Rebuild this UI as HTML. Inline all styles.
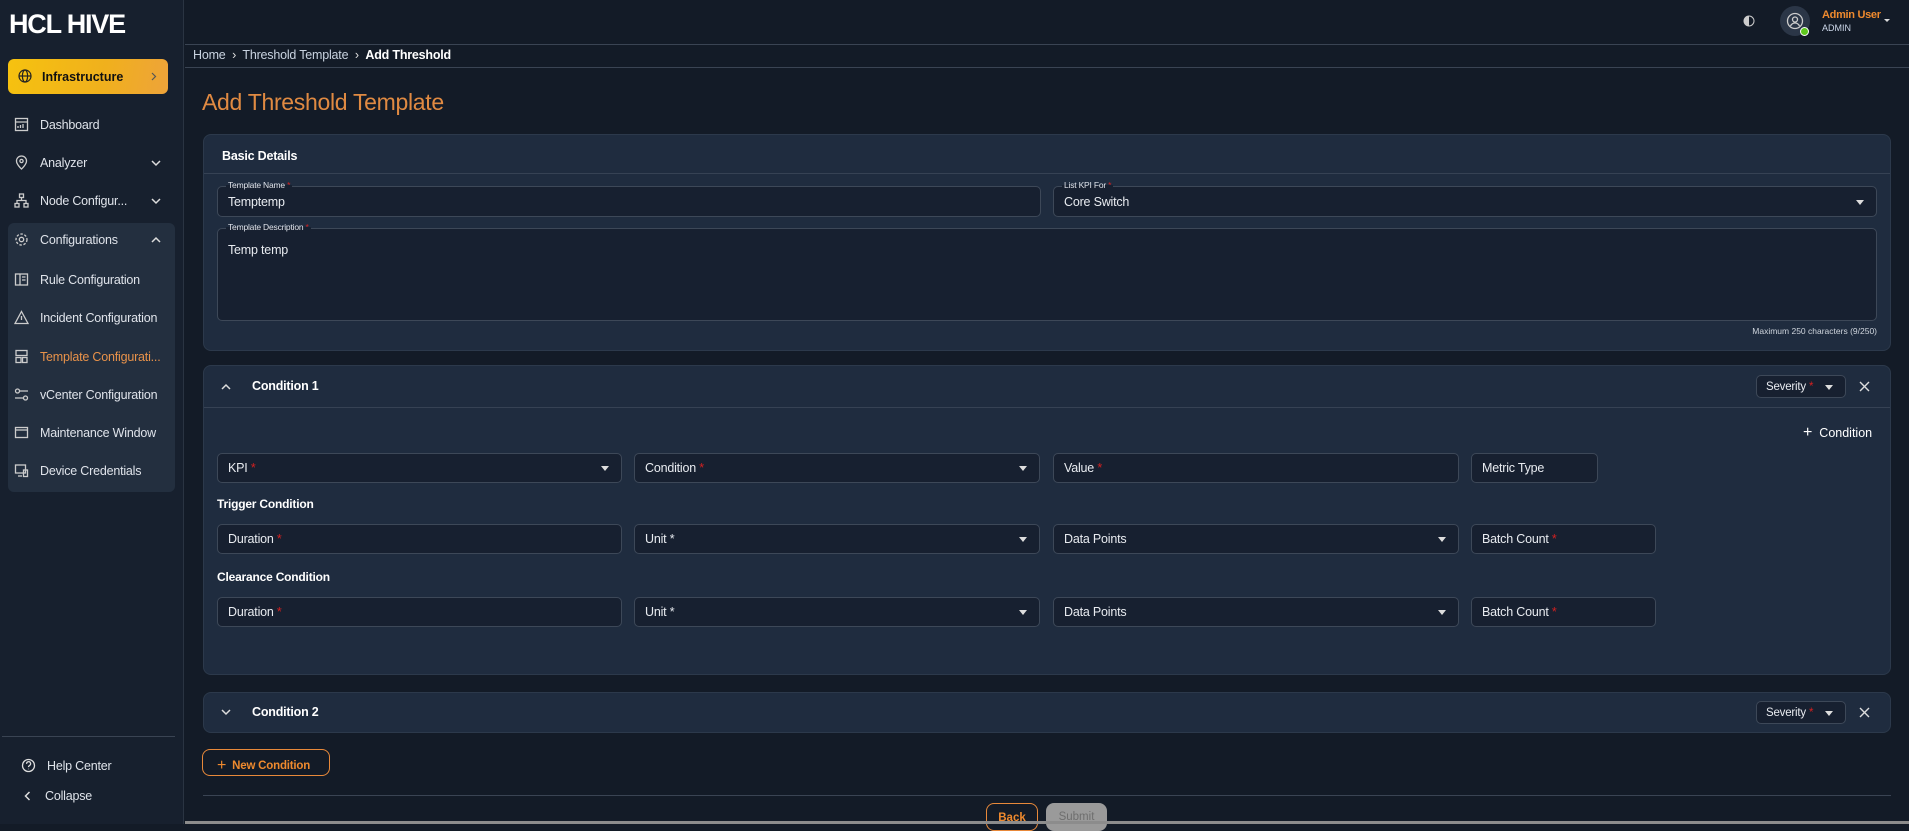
<!DOCTYPE html>
<html><head><meta charset="utf-8"><style>
*{box-sizing:border-box;margin:0;padding:0}
body{width:1909px;height:824px;overflow:hidden;background:#131b27;font-family:"Liberation Sans",sans-serif;color:#e6e9ee;position:relative}
.a{position:absolute}
#side{left:0;top:0;width:184px;height:824px;background:#17202e;border-right:1px solid #2a3442}
.logo{left:9px;top:9px;font-size:27px;font-weight:bold;color:#fff;letter-spacing:-1.2px}
.infra{left:8px;top:59px;width:160px;height:35px;border-radius:6px;background:linear-gradient(100deg,#f6c20f,#f0b01d 60%,#eea33a);color:#111;font-size:12.5px;font-weight:bold}
.nav{left:14px;font-size:12.5px;color:#dfe3ea;display:flex;align-items:center;gap:11px;letter-spacing:-0.2px}
.ic{width:15px;height:15px;display:inline-block}
.grp{left:8px;top:223px;width:167px;height:269px;background:#232f3f;border-radius:6px}
.inp{background:#172030;border:1px solid #3d4858;border-radius:5px;font-size:12.5px;color:#e8ebf0;display:flex;align-items:center;padding-left:10px;letter-spacing:-0.2px}
.st{color:#d42020}
.card{background:#1f2c3f;border:1px solid #2c394b;border-radius:8px}
.dd{position:absolute;right:12px;top:50%;margin-top:-2px;border-left:4px solid transparent;border-right:4px solid transparent;border-top:5px solid #ddd}
.lbl{position:absolute;top:-7px;left:8px;font-size:8.5px;background:linear-gradient(#1f2c3f 50%,#172030 50%);padding:0 2px;color:#dfe3ea}
.h{font-size:12.5px;font-weight:bold;color:#fff;letter-spacing:-0.2px}
</style></head><body>
<div id="side" class="a">
  <div class="a logo">HCL HIVE</div>
  <div class="a infra"><svg class="a" style="left:10px;top:10px" width="14" height="14" viewBox="0 0 14 14" fill="none" stroke="#222" stroke-width="1.2"><circle cx="7" cy="7" r="6"/><ellipse cx="7" cy="7" rx="2.6" ry="6"/><path d="M1 7h12"/></svg><span class="a" style="left:34px;top:11px">Infrastructure</span><svg class="a" style="left:143px;top:13px" width="6" height="9" viewBox="0 0 6 9" fill="none" stroke="#555" stroke-width="1.2"><path d="M1 1l3.5 3.5L1 8"/></svg></div>
  <div class="a nav" style="top:117px"><svg class="ic" viewBox="0 0 15 15" fill="none" stroke="#ccc" stroke-width="1.3"><rect x="1.5" y="1.5" width="12" height="12"/><path d="M1.5 5h12M4 11V9M6.5 11V8M9 11V7"/></svg>Dashboard</div>
  <div class="a nav" style="top:155px"><svg class="ic" viewBox="0 0 15 15" fill="none" stroke="#ccc" stroke-width="1.3"><path d="M7.5 14s-5-4.5-5-8a5 5 0 0110 0c0 3.5-5 8-5 8z"/><circle cx="7.5" cy="6" r="1.6"/></svg>Analyzer</div>
  <svg class="a" style="left:151px;top:160px" width="10" height="7" viewBox="0 0 10 7" fill="none" stroke="#ddd" stroke-width="1.5"><path d="M1 1l4 4 4-4"/></svg>
  <div class="a nav" style="top:193px"><svg class="ic" viewBox="0 0 15 15" fill="none" stroke="#ccc" stroke-width="1.3"><rect x="5.5" y="1" width="4" height="3.5"/><rect x="1" y="10.5" width="4" height="3.5"/><rect x="10" y="10.5" width="4" height="3.5"/><path d="M7.5 4.5v3M3 10.5V7.5h9v3"/></svg>Node Configur...</div>
  <svg class="a" style="left:151px;top:198px" width="10" height="7" viewBox="0 0 10 7" fill="none" stroke="#ddd" stroke-width="1.5"><path d="M1 1l4 4 4-4"/></svg>
  <div class="a grp"></div>
  <div class="a nav" style="top:232px"><svg class="ic" viewBox="0 0 15 15" fill="none" stroke="#ccc" stroke-width="1.3"><circle cx="7.5" cy="7.5" r="2.2"/><circle cx="7.5" cy="7.5" r="5.5" stroke-dasharray="2.5 1.6"/></svg>Configurations</div>
  <svg class="a" style="left:151px;top:236px" width="10" height="7" viewBox="0 0 10 7" fill="none" stroke="#ddd" stroke-width="1.5"><path d="M1 6l4-4 4 4"/></svg>
  <div class="a nav" style="top:272px"><svg class="ic" viewBox="0 0 15 15" fill="none" stroke="#ccc" stroke-width="1.3"><rect x="1.5" y="2" width="12" height="11"/><path d="M6 2v11M8 5h3.5M8 8h3.5"/></svg>Rule Configuration</div>
  <div class="a nav" style="top:310px"><svg class="ic" viewBox="0 0 15 15" fill="none" stroke="#ccc" stroke-width="1.3"><path d="M7.5 1.5L14 13.5H1z"/><path d="M7.5 6v4"/></svg>Incident Configuration</div>
  <div class="a nav" style="top:349px;color:#e8924a"><svg class="ic" viewBox="0 0 15 15" fill="none" stroke="#ccc" stroke-width="1.3"><rect x="2" y="1.5" width="11" height="5"/><rect x="2" y="8.5" width="5" height="5"/><rect x="8.5" y="8.5" width="4.5" height="5"/></svg>Template Configurati...</div>
  <div class="a nav" style="top:387px"><svg class="ic" viewBox="0 0 15 15" fill="none" stroke="#ccc" stroke-width="1.3"><circle cx="3.5" cy="4" r="2"/><circle cx="11.5" cy="11" r="2"/><path d="M5.5 4H14M1 11h8.5"/></svg>vCenter Configuration</div>
  <div class="a nav" style="top:425px"><svg class="ic" viewBox="0 0 15 15" fill="none" stroke="#ccc" stroke-width="1.3"><rect x="1.5" y="2.5" width="12" height="10"/><path d="M1.5 5h12"/></svg>Maintenance Window</div>
  <div class="a nav" style="top:463px"><svg class="ic" viewBox="0 0 15 15" fill="none" stroke="#ccc" stroke-width="1.3"><rect x="1.5" y="2" width="10" height="8"/><rect x="9.5" y="7" width="4" height="6.5"/><path d="M4 13h4"/></svg>Device Credentials</div>
  <div class="a" style="left:2px;top:736px;width:173px;height:1px;background:#3a4453"></div>
  <div class="a nav" style="left:21px;top:758px"><svg class="ic" viewBox="0 0 15 15" fill="none" stroke="#ddd" stroke-width="1.3"><circle cx="7.5" cy="7.5" r="6"/><path d="M5.6 5.8a2 2 0 113 1.6c-.8.5-1.1.9-1.1 1.7M7.5 10.8v.4"/></svg>Help Center</div>
  <div class="a nav" style="left:24px;top:789px;gap:14px"><svg width="7" height="10" viewBox="0 0 7 10" fill="none" stroke="#ddd" stroke-width="1.5"><path d="M5.5 1L1.5 5l4 4"/></svg>Collapse</div>
</div>
<div class="a" style="left:185px;top:44px;width:1724px;height:1px;background:#3a4453"></div>
<div class="a" style="left:185px;top:67px;width:1724px;height:1px;background:#3a4453"></div>
<div class="a" style="left:193px;top:48px;font-size:12.5px;color:#c9d3e0;letter-spacing:-0.2px">Home &nbsp;<span style="color:#ddd">&#8250;</span>&nbsp; Threshold Template &nbsp;<span style="color:#ddd">&#8250;</span>&nbsp; <b style="color:#fff">Add Threshold</b></div>
<svg class="a" style="left:1741px;top:13px" width="16" height="16" viewBox="0 0 16 16"><path d="M8 3a5 5 0 000 10z" fill="#ccc"/><circle cx="8" cy="8" r="5" fill="none" stroke="#ccc" stroke-width="1"/></svg>
<div class="a" style="left:1780px;top:6px;width:30px;height:30px;border-radius:50%;background:#2b3647"></div>
<svg class="a" style="left:1786px;top:12px" width="18" height="18" viewBox="0 0 18 18" fill="none" stroke="#ccc" stroke-width="1.3"><circle cx="9" cy="9" r="7.5"/><circle cx="9" cy="7.5" r="2.5"/><path d="M4.5 14c1-2 2.5-3 4.5-3s3.5 1 4.5 3"/></svg>
<div class="a" style="left:1800px;top:27px;width:9px;height:9px;border-radius:50%;background:#5ec81e;border:1.5px solid #fff"></div>
<div class="a" style="left:1822px;top:9px;font-size:11px;font-weight:bold;color:#ef8a2e;letter-spacing:-0.3px">Admin User</div>
<div class="a" style="left:1822px;top:23px;font-size:9px;color:#cdd8ea">ADMIN</div>
<div class="a" style="left:1884px;top:19px;border-left:3px solid transparent;border-right:3px solid transparent;border-top:3px solid #ddd"></div>
<div class="a" style="left:202px;top:89px;font-size:23px;color:#e08a42;letter-spacing:-0.3px">Add Threshold Template</div>
<div class="a card" style="left:203px;top:134px;width:1688px;height:217px">
  <div class="a h" style="left:18px;top:14px">Basic Details</div>
  <div class="a" style="left:0;top:38px;width:100%;height:1px;background:#364254"></div>
</div>
<div class="a inp" style="left:217px;top:186px;width:824px;height:31px">Temptemp<span class="lbl">Template Name <span class="st">*</span></span></div>
<div class="a inp" style="left:1053px;top:186px;width:824px;height:31px">Core Switch<span class="lbl">List KPI For <span class="st">*</span></span><i class="dd"></i></div>
<div class="a inp" style="left:217px;top:228px;width:1660px;height:93px;align-items:flex-start;padding-top:14px">Temp temp<span class="lbl">Template Description <span class="st">*</span></span></div>
<div class="a" style="right:32px;top:326px;font-size:8.5px;color:#cfd5dd">Maximum 250 characters (9/250)</div>
<div class="a card" style="left:203px;top:365px;width:1688px;height:310px">
  <div class="a" style="left:0;top:41px;width:100%;height:1px;background:#364254"></div>
</div>
<svg class="a" style="left:221px;top:383px" width="10" height="7" viewBox="0 0 10 7" fill="none" stroke="#ddd" stroke-width="1.5"><path d="M1 6l4-4 4 4"/></svg>
<div class="a h" style="left:252px;top:379px">Condition 1</div>
<div class="a inp" style="left:1756px;top:375px;width:90px;height:23px;font-size:11.5px;padding-left:9px">Severity&nbsp;<span class="st">*</span><i class="dd"></i></div>
<svg class="a" style="left:1859px;top:381px" width="11" height="11" viewBox="0 0 11 11" stroke="#ddd" stroke-width="1.4"><path d="M1 1l9 9M10 1l-9 9"/></svg>
<div class="a" style="left:1803px;top:424px;font-size:12.5px;color:#fff"><span style="font-size:16px">+</span>&nbsp; Condition</div>
<div class="a inp" style="left:217px;top:453px;width:405px;height:30px">KPI&nbsp;<span class="st">*</span><i class="dd"></i></div>
<div class="a inp" style="left:634px;top:453px;width:406px;height:30px">Condition&nbsp;<span class="st">*</span><i class="dd"></i></div>
<div class="a inp" style="left:1053px;top:453px;width:406px;height:30px">Value&nbsp;<span class="st">*</span></div>
<div class="a inp" style="left:1471px;top:453px;width:127px;height:30px">Metric Type</div>
<div class="a h" style="left:217px;top:497px;font-size:12px">Trigger Condition</div>
<div class="a inp" style="left:217px;top:524px;width:405px;height:30px">Duration&nbsp;<span class="st">*</span></div>
<div class="a inp" style="left:634px;top:524px;width:406px;height:30px">Unit *<i class="dd"></i></div>
<div class="a inp" style="left:1053px;top:524px;width:406px;height:30px">Data Points<i class="dd"></i></div>
<div class="a inp" style="left:1471px;top:524px;width:185px;height:30px">Batch Count&nbsp;<span class="st">*</span></div>
<div class="a h" style="left:217px;top:570px;font-size:12px">Clearance Condition</div>
<div class="a inp" style="left:217px;top:597px;width:405px;height:30px">Duration&nbsp;<span class="st">*</span></div>
<div class="a inp" style="left:634px;top:597px;width:406px;height:30px">Unit *<i class="dd"></i></div>
<div class="a inp" style="left:1053px;top:597px;width:406px;height:30px">Data Points<i class="dd"></i></div>
<div class="a inp" style="left:1471px;top:597px;width:185px;height:30px">Batch Count&nbsp;<span class="st">*</span></div>
<div class="a card" style="left:203px;top:692px;width:1688px;height:41px"></div>
<svg class="a" style="left:221px;top:709px" width="10" height="7" viewBox="0 0 10 7" fill="none" stroke="#ddd" stroke-width="1.5"><path d="M1 1l4 4 4-4"/></svg>
<div class="a h" style="left:252px;top:705px">Condition 2</div>
<div class="a inp" style="left:1756px;top:701px;width:90px;height:23px;font-size:11.5px;padding-left:9px">Severity&nbsp;<span class="st">*</span><i class="dd"></i></div>
<svg class="a" style="left:1859px;top:707px" width="11" height="11" viewBox="0 0 11 11" stroke="#ddd" stroke-width="1.4"><path d="M1 1l9 9M10 1l-9 9"/></svg>
<div class="a" style="left:202px;top:749px;width:128px;height:27px;border:1px solid #e8893a;border-radius:8px;color:#ef8a2e;font-size:11.5px;font-weight:bold;padding:6px 0 0 14px;letter-spacing:-0.2px"><span style="font-size:16px;font-weight:normal;position:relative;top:1px">+</span>&nbsp; New Condition</div>
<div class="a" style="left:203px;top:795px;width:1688px;height:1px;background:#3a4453"></div>
<div class="a" style="left:986px;top:803px;width:52px;height:28px;border:1px solid #e8893a;border-radius:8px;color:#ef8a2e;font-size:11.5px;font-weight:bold;text-align:center;padding-top:8px">Back</div>
<div class="a" style="left:1046px;top:803px;width:61px;height:28px;background:#9a9a9a;border-radius:8px;color:#6e6e6e;font-size:11.5px;text-align:center;padding-top:8px">Submit</div>
<div class="a" style="left:185px;top:821px;width:1724px;height:3px;background:#8c8c8c"></div>
</body></html>
